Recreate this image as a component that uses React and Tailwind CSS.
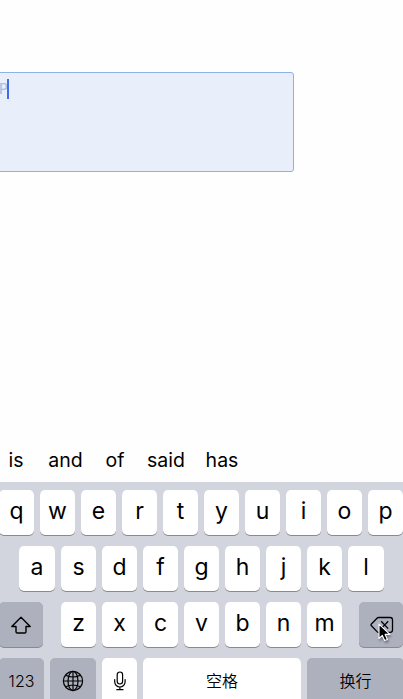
import React from "react";

const keyBase =
  "flex h-[45px] shrink-0 items-center justify-center rounded-[5px] shadow-[0_1px_0_#898a8d]";

function Key({ className = "w-[35px]", dark = false, children }) {
  return (
    <div className={`${keyBase} ${dark ? "bg-[#adb1be]" : "bg-white"} ${className}`}>
      {children}
    </div>
  );
}

function Letter({ children, className }) {
  return (
    <Key className={className}>
      <span className="-mt-[2px] text-[23px] leading-none font-[370]">{children}</span>
    </Key>
  );
}

function ShiftIcon() {
  return (
    <svg width="22" height="20" viewBox="0 0 22 20" fill="none" stroke="#000" strokeWidth="1.4" strokeLinejoin="round">
      <path d="M11 2.2 1.8 11.5H6v5.2q0 1.3 1.3 1.3h7.4q1.3 0 1.3-1.3v-5.2h4.2z" />
    </svg>
  );
}

function GlobeIcon() {
  return (
    <svg width="22" height="22" viewBox="0 0 22 22" fill="none" stroke="#000" strokeWidth="1.2">
      <circle cx="11" cy="11" r="9.6" />
      <ellipse cx="11" cy="11" rx="5" ry="9.6" />
      <path d="M11 1.4v19.2M1.4 11h19.2M3.6 5.2Q11 8.8 18.4 5.2M3.6 16.8Q11 13.2 18.4 16.8" />
    </svg>
  );
}

function MicIcon() {
  return (
    <svg width="14" height="20" viewBox="0 0 14 20" fill="none" stroke="#000" strokeWidth="1.2" strokeLinecap="round">
      <rect x="4.2" y="1" width="5.4" height="12" rx="2.7" />
      <path d="M1.7 8.5v2.3a5.2 5.2 0 0 0 10.4 0V8.5M6.9 16v2.7M3.8 18.7h6.2" />
    </svg>
  );
}

function DeleteIcon() {
  return (
    <svg className="ml-[2px]" width="24" height="18" viewBox="0 0 24 18" fill="none" stroke="#000" strokeWidth="1.3" strokeLinejoin="round">
      <path d="M8.5 1.5h11.7q2.3 0 2.3 2.3v10.2q0 2.3-2.3 2.3H8.5q-.8 0-1.5-.7L1.2 9.5q-.5-.6 0-1.2L7 2.2q.7-.7 1.5-.7z" />
      <path d="m11.2 5.2 7 7.4m0-7.4-7 7.4" />
    </svg>
  );
}

function Pointer() {
  return (
    <svg
      className="absolute top-[21px] left-[19px] drop-shadow-[1px_2px_1px_rgba(0,0,0,0.35)]"
      width="13"
      height="19"
      viewBox="0 0 13 19"
    >
      <path
        d="M1 1.2v14.3l3.3-3.1 2.4 5.2 2.7-1.2-2.3-5h4.7z"
        fill="#000"
        stroke="#fff"
        strokeWidth="1.1"
        strokeLinejoin="round"
      />
    </svg>
  );
}

export default function App() {
  return (
    <div
      lang="zh-CN"
      className="flex h-[699px] w-[403px] flex-col overflow-hidden bg-[#fefefe] font-[Inter,'Noto_Sans_CJK_SC',sans-serif] text-black"
    >
      <div className="mt-[72px] -ml-[4px] flex h-[100px] w-[298px] shrink-0 items-start rounded-[3px] border border-[#8ab4e8] bg-[#e8effb] pt-[6px]">
        <span className="w-[11px] text-right text-[14px] leading-[20px] font-medium text-[#a9c0e3]">P</span>
        <span className="-ml-px h-[20px] w-[2px] bg-[#416cec]" />
      </div>

      <div className="mt-auto flex h-[44px] shrink-0 items-center pt-[2px] text-[19.5px] leading-none font-[370]">
        <span className="w-[32px] text-center">is</span>
        <span className="w-[67px] text-center">and</span>
        <span className="w-[32px] text-center">of</span>
        <span className="w-[70px] text-center">said</span>
        <span className="w-[42px] text-center">has</span>
      </div>

      <div className="-ml-px flex h-[217px] w-[404px] shrink-0 flex-col gap-[11px] overflow-hidden bg-[#d2d5dd] pt-[8px]">
        <div className="flex gap-[6px]">
          {"qwertyuiop".split("").map((c) => (
            <Letter key={c}>{c}</Letter>
          ))}
        </div>
        <div className="flex gap-[6px] pl-[20px]">
          {"asdfghjkl".split("").map((c) => (
            <Letter key={c} className={c === "a" || c === "l" ? "w-[36px]" : "w-[35px]"}>
              {c}
            </Letter>
          ))}
        </div>
        <div className="flex">
          <Key dark className="w-[44px]">
            <ShiftIcon />
          </Key>
          <div className="mr-[17px] ml-[18px] flex gap-[6px]">
            {"zxcvbnm".split("").map((c) => (
              <Letter key={c}>{c}</Letter>
            ))}
          </div>
          <Key dark className="relative w-[44px]">
            <DeleteIcon />
            <Pointer />
          </Key>
        </div>
        <div className="flex gap-[6px]">
          <Key dark className="w-[45px] text-[16px] font-[350]">
            123
          </Key>
          <Key dark className="w-[46px]">
            <GlobeIcon />
          </Key>
          <Key>
            <MicIcon />
          </Key>
          <Key className="w-[158px] text-[16px] font-[350]">空格</Key>
          <Key dark className="w-[97px] text-[16px] font-[350]">
            换行
          </Key>
        </div>
      </div>
    </div>
  );
}
